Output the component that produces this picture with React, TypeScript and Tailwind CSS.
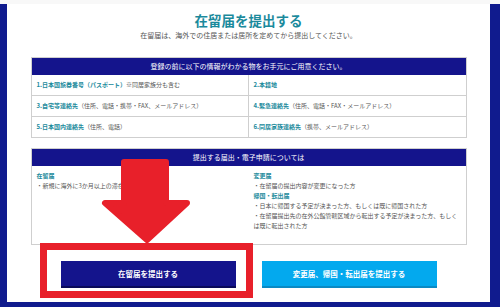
import React from "react";

const teal = "text-[#1b8a9c]";

function Cell({ title, note, right }: { title: string; note?: string; right?: boolean }) {
  return (
    <div
      className={`h-[21px] flex items-center px-[5px] border-b border-[#cfcfcf] ${right ? "" : "border-r"} text-[6px] leading-none whitespace-nowrap`}
    >
      <span className={`${teal} font-bold`}>{title}</span>
      {note && <span className="text-[#555]">{note}</span>}
    </div>
  );
}

export default function App() {
  return (
    <div
      className="relative w-[500px] h-[307px] overflow-hidden bg-[#f8f8f8] pt-[4px]"
      style={{ fontFamily: '"Noto Sans CJK JP", "Noto Sans", sans-serif' }}
    >
      <div className="h-[303px] border-l-[7px] border-r-[10px] border-b-[5px] border-[#101b8e]">
        <div className="h-full bg-white flex flex-col items-center">
          <h1 className="pt-[6px] text-[13.5px] leading-[20px] font-bold text-[#1b8a9c]">在留届を提出する</h1>
          <p className="text-[7px] leading-[10px] text-[#555]">
            在留届は、海外での住居または居所を定めてから提出してください。
          </p>

          <div className="mt-[17px] w-[436px] border-x border-t border-[#cfcfcf]">
            <div className="h-[17px] bg-[#14148c] text-white text-[7px] flex items-center justify-center">
              登録の前に以下の情報がわかる物をお手元にご用意ください。
            </div>
            <div className="grid grid-cols-2">
              <Cell title="1.日本国旅券番号（パスポート）" note="※同居家族分も含む" />
              <Cell title="2.本籍地" right />
              <Cell title="3.自宅等連絡先" note="（住所、電話・携帯・FAX、メールアドレス）" />
              <Cell title="4.緊急連絡先" note="（住所、電話・FAX・メールアドレス）" right />
              <Cell title="5.日本国内連絡先" note="（住所、電話）" />
              <Cell title="6.同居家族連絡先" note="（携帯、メールアドレス）" right />
            </div>
          </div>

          <div className="mt-[10px] w-[436px] border border-[#cfcfcf]">
            <div className="h-[17px] bg-[#14148c] text-white text-[7px] flex items-center justify-center">
              提出する届出・電子申請については
            </div>
            <div className="h-[78px] grid grid-cols-2 pt-[5px] text-[6px] leading-[10px] text-[#555]">
              <div className="pl-[5px]">
                <div className={`${teal} font-bold`}>在留届</div>
                <div>・新規に海外に3か月以上の滞在をする方</div>
              </div>
              <div className="pl-[5px] whitespace-nowrap">
                <div className={`${teal} font-bold`}>変更届</div>
                <div>・在留届の提出内容が変更になった方</div>
                <div className={`${teal} font-bold`}>帰国・転出届</div>
                <div>・日本に帰国する予定が決まった方、もしくは既に帰国された方</div>
                <div>・在留届提出先の在外公館管轄区域から転出する予定が決まった方、もしく</div>
                <div>は既に転出された方</div>
              </div>
            </div>
          </div>

          <div className="mt-[16px] flex gap-[26px]">
            <button className="w-[175px] h-[27px] bg-[#14148c] border-b-2 border-[#0a0a5a] text-white text-[7.5px] font-bold">
              在留届を提出する
            </button>
            <button className="w-[175px] h-[27px] bg-[#03a9ee] border-b-2 border-[#0a8ac4] text-white text-[7.5px] font-bold">
              変更届、帰国・転出届を提出する
            </button>
          </div>
        </div>
      </div>

      <svg className="absolute left-0 top-0 pointer-events-none" width="500" height="307">
        <polygon
          points="124,162 166,162 166,203 187,203 147,240 105,203 124,203"
          fill="#e8202a"
          stroke="#e8202a"
          strokeWidth="6"
          strokeLinejoin="round"
        />
      </svg>
      <div className="absolute left-[40px] top-[243px] w-[213px] h-[55px] border-[7px] border-[#e8202a]" />
    </div>
  );
}
